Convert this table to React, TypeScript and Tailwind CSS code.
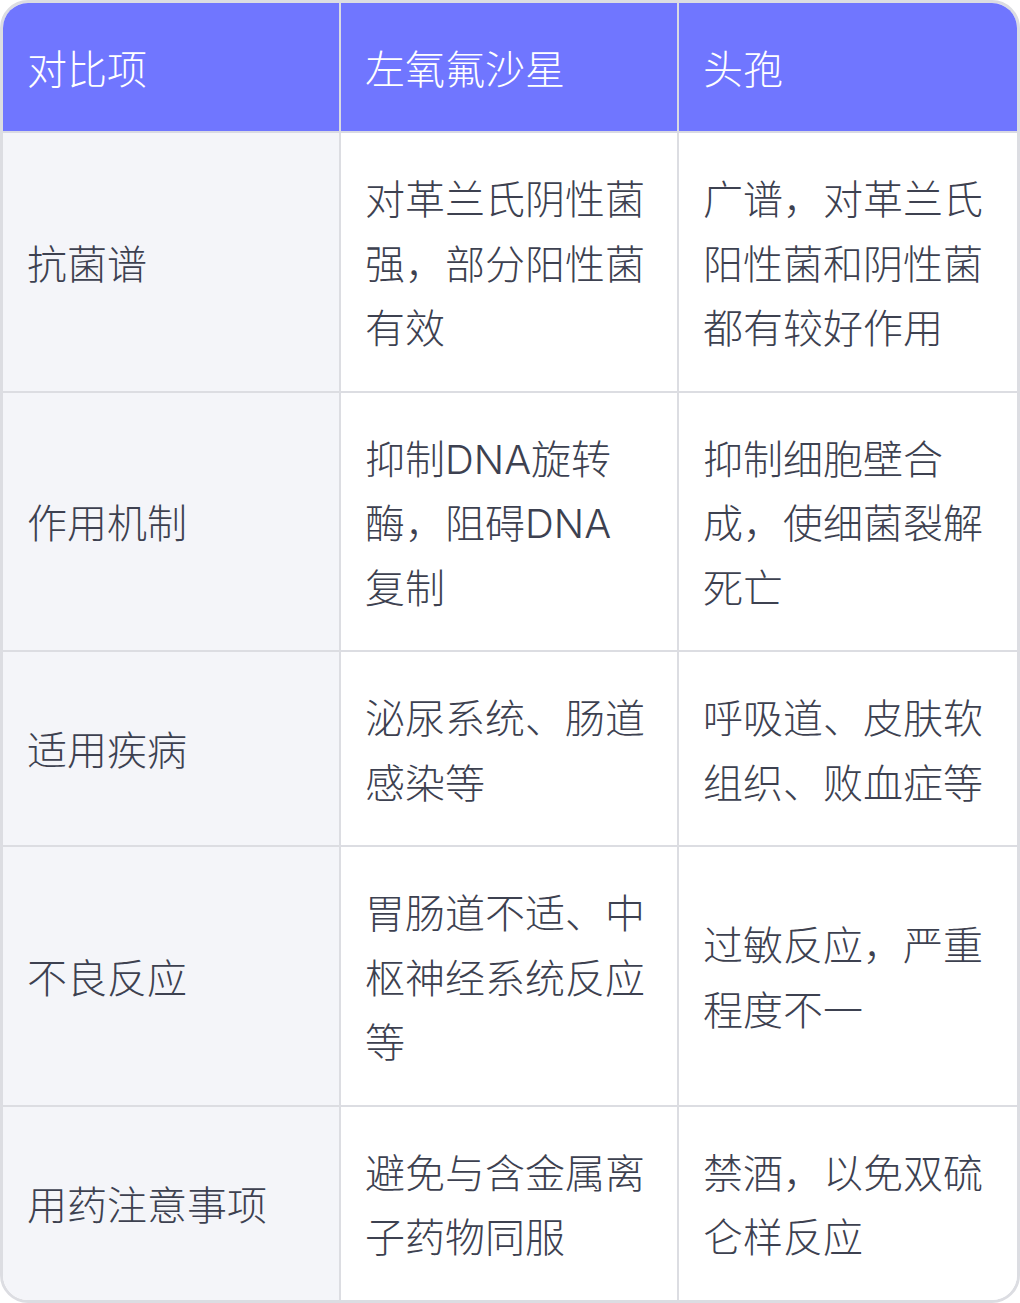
const rows: [string, string, string][] = [
  ['抗菌谱', '对革兰氏阴性菌强，部分阳性菌有效', '广谱，对革兰氏阳性菌和阴性菌都有较好作用'],
  ['作用机制', '抑制DNA旋转酶，阻碍DNA复制', '抑制细胞壁合成，使细菌裂解死亡'],
  ['适用疾病', '泌尿系统、肠道感染等', '呼吸道、皮肤软组织、败血症等'],
  ['不良反应', '胃肠道不适、中枢神经系统反应等', '过敏反应，严重程度不一'],
  ['用药注意事项', '避免与含金属离子药物同服', '禁酒，以免双硫仑样反应'],
];

const headers = ['对比项', '左氧氟沙星', '头孢'];

export default function App() {
  return (
    <div className="w-[1020px] bg-white font-['Inter','Noto_Sans_CJK_SC',sans-serif] font-light">
      <div className="overflow-hidden rounded-[28px] border-[3px] border-[#dcdde2]">
        <div className="grid grid-cols-3 bg-[#7076ff] text-white">
          {headers.map((h, i) => (
            <div
              key={h}
              className={`pl-6 pr-[30px] pt-[35px] pb-[29px] text-[40px] leading-[64px] border-b-2 border-[#d9dae3] ${i < 2 ? 'border-r-2' : ''}`}
            >
              {h}
            </div>
          ))}
        </div>
        {rows.map((r, ri) => (
          <div key={r[0]} className="grid grid-cols-3 text-[#3d4150]">
            {r.map((c, ci) => (
              <div
                key={ci}
                className={`flex items-center pl-6 pr-[30px] pt-[35px] pb-[29px] text-[40px] leading-[64.5px] border-[#dcdde2] ${ci < 2 ? 'border-r-2' : ''} ${ri < rows.length - 1 ? 'border-b-2' : ''} ${ci === 0 ? 'bg-[#f4f5f9]' : 'bg-white'}`}
              >
                <span>{c}</span>
              </div>
            ))}
          </div>
        ))}
      </div>
    </div>
  );
}
